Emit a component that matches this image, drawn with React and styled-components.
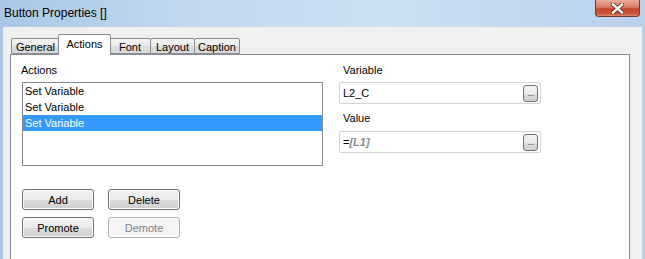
import React from 'react';
import styled, { createGlobalStyle } from 'styled-components';

const GlobalStyle = createGlobalStyle`
  html, body {
    margin: 0;
    padding: 0;
    background: #b9d1ea;
  }
  body {
    font-family: "Liberation Sans", Arial, sans-serif;
    font-size: 11px;
    color: #000;
  }
`;

const Window = styled.div`
  width: 645px;
  height: 259px;
  overflow: hidden;
  display: flex;
  flex-direction: column;
  background: linear-gradient(90deg, #a9c7e6 0%, #c2d8ef 30%, #cde0f3 60%, #b8d1eb 100%);
`;

const TitleBar = styled.div`
  height: 27px;
  flex: none;
  display: flex;
  justify-content: space-between;
  align-items: flex-start;
  padding-left: 4px;
  padding-right: 5px;
`;

const Title = styled.div`
  font-size: 12px;
  line-height: 12px;
  margin-top: 7px;
  color: #000;
`;

const CloseButton = styled.div`
  width: 45px;
  height: 17px;
  box-sizing: border-box;
  border: 1px solid #7d3a2c;
  border-top: none;
  border-radius: 0 0 4px 4px;
  background: linear-gradient(180deg, #e9ab99 0%, #dc7d66 45%, #c8462b 55%, #c9543a 85%, #e08f74 100%);
  display: flex;
  align-items: center;
  justify-content: center;
`;

const Client = styled.div`
  flex: 1;
  margin: 0 3px;
  background: #f0f0f0;
  padding: 0 12px 0 7px;
  display: flex;
  flex-direction: column;
`;

const TabStrip = styled.div`
  height: 27px;
  flex: none;
  display: flex;
  align-items: flex-end;
  padding-left: 1px;
  position: relative;
  z-index: 1;
`;

const Tab = styled.div`
  box-sizing: border-box;
  width: ${p => p.$w}px;
  height: ${p => (p.$active ? 21 : 16)}px;
  margin-left: ${p => (p.$active ? -2 : -1)}px;
  margin-right: ${p => (p.$active ? -1 : 0)}px;
  margin-bottom: ${p => (p.$active ? -1 : 0)}px;
  border: 1px solid #898c95;
  border-bottom: ${p => (p.$active ? 'none' : '1px solid #898c95')};
  border-radius: 2px 2px 0 0;
  background: ${p => (p.$active ? '#fff' : 'linear-gradient(180deg, #f3f3f3 0%, #ebebeb 50%, #dddddd 51%, #d9d9d9 100%)')};
  position: relative;
  z-index: ${p => (p.$active ? 2 : 1)};
  text-align: center;
  padding-top: ${p => (p.$active ? 3 : 2)}px;
  line-height: 12px;
  white-space: nowrap;
  &:first-child {
    margin-left: 0;
  }
`;

const Panel = styled.div`
  flex: 1;
  border: 1px solid #898c95;
  border-bottom: none;
  background: #fff;
  padding: 9px 0 0 10px;
  display: flex;
  align-items: flex-start;
`;

const LeftColumn = styled.div`
  width: 302px;
  display: flex;
  flex-direction: column;
`;

const RightColumn = styled.div`
  width: 202px;
  margin-left: 16px;
  display: flex;
  flex-direction: column;
`;

const Label = styled.div`
  line-height: 13px;
  height: 13px;
  padding-left: ${p => p.$indent || 0}px;
  margin-top: ${p => p.$top || 0}px;
  margin-bottom: ${p => p.$bottom || 5}px;
`;

const ListBox = styled.div`
  margin-left: 1px;
  width: 301px;
  height: 84px;
  box-sizing: border-box;
  border: 1px solid #828790;
`;

const ListRow = styled.div`
  height: 16px;
  line-height: 16px;
  padding-left: 2px;
  color: ${p => (p.$selected ? '#fff' : '#000')};
  background: ${p => (p.$selected ? '#3399ff' : 'transparent')};
  outline: ${p => (p.$selected ? '1px dotted #d9822b' : 'none')};
  outline-offset: -1px;
`;

const ButtonGrid = styled.div`
  margin-top: 23px;
  margin-left: 1px;
  display: grid;
  grid-template-columns: 72px 72px;
  column-gap: 14px;
  row-gap: 7px;
`;

const Button = styled.div`
  box-sizing: border-box;
  height: 21px;
  border: 1px solid ${p => (p.$disabled ? '#adb2b5' : '#707070')};
  border-radius: 3px;
  box-shadow: inset 0 0 0 1px ${p => (p.$disabled ? '#fcfcfc' : '#fbfbfb')};
  background: ${p => (p.$disabled ? '#f4f4f4' : 'linear-gradient(180deg, #f2f2f2 0%, #ebebeb 50%, #dddddd 51%, #cfcfcf 100%)')};
  color: ${p => (p.$disabled ? '#838383' : '#000')};
  display: flex;
  align-items: center;
  justify-content: center;
`;

const Field = styled.div`
  box-sizing: border-box;
  height: 22px;
  border: 1px solid #d2d2d2;
  border-radius: 2px;
  display: flex;
  align-items: center;
  justify-content: space-between;
  padding: 0 2px 0 3px;
`;

const FieldText = styled.span`
  line-height: 13px;
`;

const Placeholder = styled.span`
  color: #8a8a8a;
  font-style: italic;
  font-weight: bold;
`;

const EllipsisButton = styled.div`
  box-sizing: border-box;
  width: 15px;
  height: 17px;
  border: 1px solid #707070;
  border-radius: 3px;
  background: linear-gradient(180deg, #f2f2f2 0%, #ebebeb 50%, #dddddd 51%, #cfcfcf 100%);
  color: #27408b;
  font-size: 9px;
  line-height: 9px;
  display: flex;
  align-items: flex-end;
  justify-content: center;
  padding-bottom: 3px;
  letter-spacing: -0.5px;
`;

const tabs = [
  { label: 'General', w: 49 },
  { label: 'Actions', w: 53, active: true },
  { label: 'Font', w: 42 },
  { label: 'Layout', w: 45 },
  { label: 'Caption', w: 46 },
];

const actions = ['Set Variable', 'Set Variable', 'Set Variable'];

export default function App() {
  return (
    <>
      <GlobalStyle />
      <Window>
        <TitleBar>
          <Title>Button Properties []</Title>
          <CloseButton>
            <svg width="13" height="11" viewBox="0 0 13 11">
              <path d="M2 1.5 L11 9.5 M11 1.5 L2 9.5" stroke="#5a2a22" strokeWidth="4.2" strokeLinecap="square" />
              <path d="M2 1.5 L11 9.5 M11 1.5 L2 9.5" stroke="#fff" strokeWidth="2.4" strokeLinecap="square" />
            </svg>
          </CloseButton>
        </TitleBar>
        <Client>
          <TabStrip>
            {tabs.map(t => (
              <Tab key={t.label} $w={t.w} $active={t.active}>{t.label}</Tab>
            ))}
          </TabStrip>
          <Panel>
            <LeftColumn>
              <Label>Actions</Label>
              <ListBox>
                {actions.map((a, i) => (
                  <ListRow key={i} $selected={i === 2}>{a}</ListRow>
                ))}
              </ListBox>
              <ButtonGrid>
                <Button>Add</Button>
                <Button>Delete</Button>
                <Button>Promote</Button>
                <Button $disabled>Demote</Button>
              </ButtonGrid>
            </LeftColumn>
            <RightColumn>
              <Label $indent={4}>Variable</Label>
              <Field>
                <FieldText>L2_C</FieldText>
                <EllipsisButton>...</EllipsisButton>
              </Field>
              <Label $indent={4} $top={8} $bottom={6}>Value</Label>
              <Field>
                <FieldText>=<Placeholder>[L1]</Placeholder></FieldText>
                <EllipsisButton>...</EllipsisButton>
              </Field>
            </RightColumn>
          </Panel>
        </Client>
      </Window>
    </>
  );
}
